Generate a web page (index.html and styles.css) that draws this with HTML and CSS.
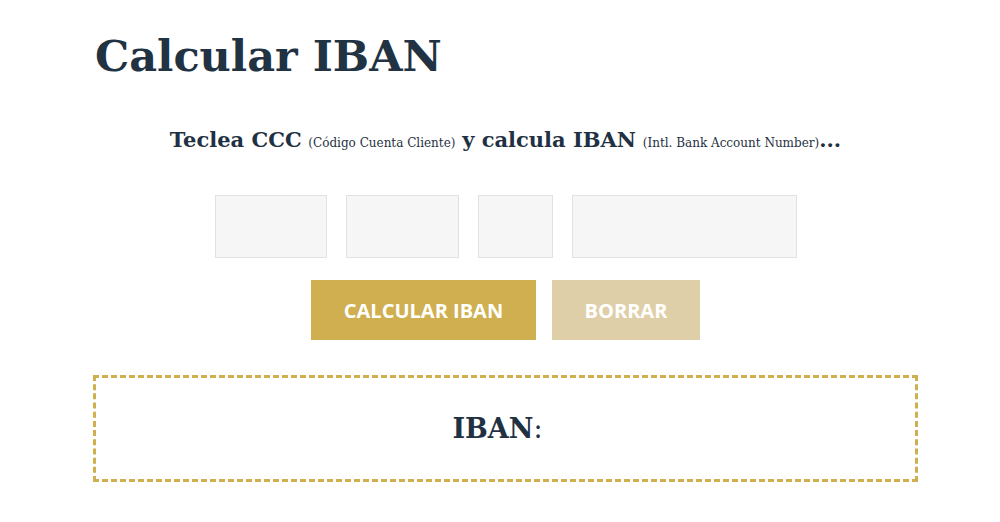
FILE: index.html
```html
<!DOCTYPE html>
<html lang="es">
<head>
    <meta charset="UTF-8">
    <meta name="viewport" content="width=device-width, initial-scale=1.0">
    <title>Calcular IBAN</title>
    <link rel="stylesheet" href="styles.css">
</head>
<body>
    <div class="page">
        <h1 class="title">Calcular IBAN</h1>
        <p class="intro">
            <strong>Teclea CCC</strong> <small>(Código Cuenta Cliente)</small>
            <strong>y calcula IBAN</strong> <small>(Intl. Bank Account Number)</small><strong>...</strong>
        </p>
        <div class="ccc-fields">
            <input type="text" class="field field-entidad" maxlength="4">
            <input type="text" class="field field-oficina" maxlength="4">
            <input type="text" class="field field-dc" maxlength="2">
            <input type="text" class="field field-cuenta" maxlength="10">
        </div>
        <div class="actions">
            <button type="button" class="btn btn-calcular">Calcular IBAN</button>
            <button type="button" class="btn btn-borrar">Borrar</button>
        </div>
        <div class="result">
            <span class="result-label">IBAN</span>:<span class="result-value"></span>
        </div>
    </div>
</body>
</html>
```

FILE: styles.css
```css
body {
    margin: 0;
    background-color: #fff;
    font-family: 'DejaVu Serif', 'Liberation Serif', serif;
    color: #1f3142;
}

.page {
    width: 825px;
    margin-left: 93px;
    padding-top: 24px;
}

.title {
    margin: 0 0 0 2px;
    font-size: 43px;
    line-height: 64px;
    font-weight: bold;
    color: #213243;
}

.intro {
    margin: 36px 0 0;
    text-align: center;
    font-size: 21px;
    line-height: 32px;
}

.intro strong {
    font-weight: bold;
}

.intro small {
    font-size: 12px;
}

.ccc-fields {
    display: flex;
    justify-content: center;
    gap: 19px;
    margin-top: 36px;
}

.field {
    height: 63px;
    box-sizing: border-box;
    border: 1px solid #e2e2e2;
    background-color: #f6f6f6;
    padding: 0 10px;
}

.field-entidad { width: 112px; }
.field-oficina { width: 113px; }
.field-dc { width: 75px; }
.field-cuenta { width: 225px; }

.actions {
    display: flex;
    justify-content: center;
    gap: 16px;
    margin-top: 22px;
}

.btn {
    height: 60px;
    border: none;
    color: #fff;
    font-family: 'Open Sans', sans-serif;
    font-size: 20px;
    font-weight: bold;
    text-transform: uppercase;
    cursor: pointer;
}

.btn-calcular {
    width: 225px;
    background-color: #cfaf50;
}

.btn-borrar {
    width: 148px;
    background-color: #dfcfa8;
}

.result {
    margin-top: 35px;
    height: 107px;
    box-sizing: border-box;
    border: 3px dashed #cfaf50;
    display: flex;
    justify-content: center;
    align-items: center;
    font-size: 27px;
}

.result-label {
    font-weight: bold;
}

.result-value {
    min-width: 16px;
}
```
